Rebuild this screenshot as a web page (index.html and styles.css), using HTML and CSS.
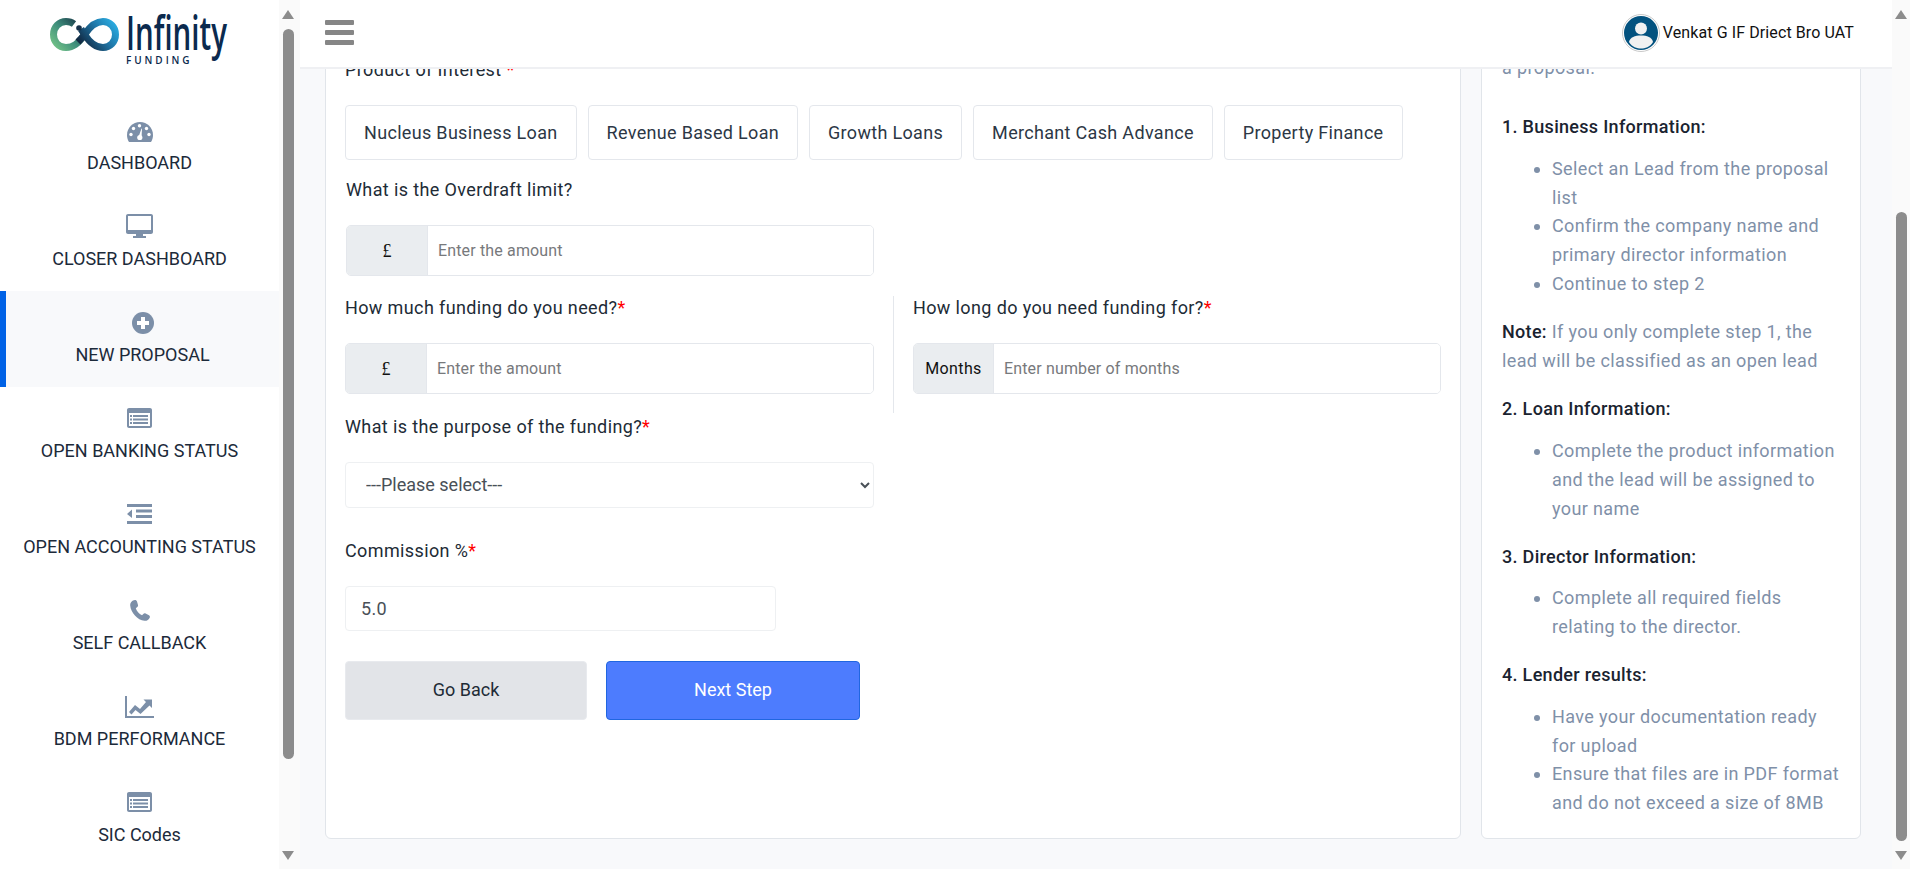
FILE: index.html
```html
<!DOCTYPE html>
<html lang="en">

<head>
    <meta charset="UTF-8">
    <meta name="viewport" content="width=device-width, initial-scale=1.0">
    <title>New Proposal - Infinity Funding</title>
    <link rel="stylesheet" href="styles.css">
</head>

<body>
    <div class="app">
        <aside class="sidebar">
            <div class="logo">
                <svg width="280" height="99" viewBox="0 0 280 99">
                    <defs>
                        <linearGradient id="logoLeft" gradientUnits="userSpaceOnUse" x1="54" y1="48" x2="84" y2="20">
                            <stop offset="0" stop-color="#73c387"></stop>
                            <stop offset="0.45" stop-color="#3f8f7c"></stop>
                            <stop offset="1" stop-color="#13293f"></stop>
                        </linearGradient>
                        <linearGradient id="logoRight" gradientUnits="userSpaceOnUse" x1="84" y1="48" x2="116" y2="22">
                            <stop offset="0" stop-color="#10263f"></stop>
                            <stop offset="0.55" stop-color="#1f77a8"></stop>
                            <stop offset="1" stop-color="#2bb0e6"></stop>
                        </linearGradient>
                    </defs>
                    <path class="logo-loop" stroke="url(#logoLeft)" d="M85 34C78 44 73 47.500 66 47.500C58 47.500 53.500 41 53.500 34.500C53.500 27 59 21.500 66 21.500C69 21.500 72 22.500 74 24"></path>
                    <path class="logo-loop" stroke="url(#logoRight)" d="M78 42C80 40 82 38 85 34C91 25 96 21.500 103 21.500C110 21.500 115.500 27 115.500 34.500C115.500 42 110 47.500 103 47.500C96 47.500 90 43 85 35L81 29"></path>
                    <circle cx="79" cy="28" r="2.800" fill="#16304a"></circle>
                    <text class="logo-name" x="126" y="50" textLength="101" lengthAdjust="spacingAndGlyphs">Infinity</text>
                    <text class="logo-sub" x="126" y="64" textLength="64">FUNDING</text>
                </svg>
            </div>
            <nav>
                <a class="nav-item" href="#">
                    <span class="nav-icon icon-low">
                        <svg width="26" height="20" viewBox="0 0 26 20">
                            <path class="icon-fill" d="M13 0C5.800 0 0 5.800 0 13C0 15.600.7 18 2 20H24C25.300 18 26 15.600 26 13C26 5.800 20.200 0 13 0Z"></path>
                            <g fill="#fff">
                                <circle cx="4" cy="12.500" r="1.700"></circle>
                                <circle cx="6.500" cy="6.500" r="1.700"></circle>
                                <circle cx="12.500" cy="3.800" r="1.700"></circle>
                                <circle cx="19.500" cy="6.500" r="1.700"></circle>
                                <circle cx="22" cy="12.500" r="1.700"></circle>
                                <circle cx="12.800" cy="15.500" r="2.600"></circle>
                                <path d="M11.500 15L14.500 6.500L15 6.700L14.500 16Z"></path>
                            </g>
                        </svg>
                    </span>
                    <span>DASHBOARD</span>
                </a>
                <a class="nav-item" href="#">
                    <span class="nav-icon">
                        <svg width="27" height="24" viewBox="0 0 27 24">
                            <path class="icon-fill" fill-rule="evenodd" d="M2 0H25C26.100 0 27 .9 27 2V18C27 19.100 26.100 20 25 20H17V22H20V24H7V22H10V20H2C.9 20 0 19.100 0 18V2C0 .9.900 0 2 0ZM2 2V16H25V2Z"></path>
                        </svg>
                    </span>
                    <span>CLOSER DASHBOARD</span>
                </a>
                <a class="nav-item active" href="#">
                    <span class="nav-icon icon-mid">
                        <svg width="22" height="22" viewBox="0 0 22 22">
                            <circle class="icon-fill" cx="11" cy="11" r="11"></circle>
                            <path fill="#fff" d="M9 5H13V9H17V13H13V17H9V13H5V9H9Z"></path>
                        </svg>
                    </span>
                    <span>NEW PROPOSAL</span>
                </a>
                <a class="nav-item" href="#">
                    <span class="nav-icon">
                        <svg width="25" height="20" viewBox="0 0 25 20">
                            <path class="icon-fill" fill-rule="evenodd" d="M2 0H23C24.100 0 25 .9 25 2V18C25 19.100 24.100 20 23 20H2C.9 20 0 19.100 0 18V2C0 .9.900 0 2 0ZM2 5V18H23V5Z"></path>
                            <path class="icon-fill" d="M6 7H21V9H6ZM6 10.500H21V12.500H6ZM6 14H21V16H6ZM3 7H5V9H3ZM3 10.500H5V12.500H3ZM3 14H5V16H3Z"></path>
                        </svg>
                    </span>
                    <span>OPEN BANKING STATUS</span>
                </a>
                <a class="nav-item" href="#">
                    <span class="nav-icon">
                        <svg width="25" height="20" viewBox="0 0 25 20">
                            <path class="icon-fill" d="M0 0H25V3H0ZM9 5.500H25V8.500H9ZM9 11H25V14H9ZM0 17H25V20H0ZM5 5.500V14L0 10Z"></path>
                        </svg>
                    </span>
                    <span>OPEN ACCOUNTING STATUS</span>
                </a>
                <a class="nav-item" href="#">
                    <span class="nav-icon">
                        <svg width="20" height="21" viewBox="0 0 20 21">
                            <path class="icon-fill" d="M5 0C6 0 6.500.5 7 1.500L8 5C8.200 6 7.800 6.600 7 7.200L5.800 8.200C6.500 11 9 14 12 15.300L13.300 14C14 13.300 14.700 13.100 15.600 13.500L19 15.300C20 16 20.100 16.800 19.700 17.700C18.800 19.800 16.800 21 14.500 20.800C7.500 20.200 .8 12.500.2 5.500C0 3 2 .2 5 0Z"></path>
                        </svg>
                    </span>
                    <span>SELF CALLBACK</span>
                </a>
                <a class="nav-item" href="#">
                    <span class="nav-icon icon-mid">
                        <svg width="29" height="22" viewBox="0 0 29 22">
                            <path class="icon-fill" d="M0 0H2V20H29V22H0ZM4 16L10 9L15 13L21 6L18.500 3.500H27V12L24.500 9.500L15.500 18L10.500 14L6.500 18.500Z"></path>
                        </svg>
                    </span>
                    <span>BDM PERFORMANCE</span>
                </a>
                <a class="nav-item" href="#">
                    <span class="nav-icon">
                        <svg width="25" height="20" viewBox="0 0 25 20">
                            <path class="icon-fill" fill-rule="evenodd" d="M2 0H23C24.100 0 25 .9 25 2V18C25 19.100 24.100 20 23 20H2C.9 20 0 19.100 0 18V2C0 .9.900 0 2 0ZM2 5V18H23V5Z"></path>
                            <path class="icon-fill" d="M6 7H21V9H6ZM6 10.500H21V12.500H6ZM6 14H21V16H6ZM3 7H5V9H3ZM3 10.500H5V12.500H3ZM3 14H5V16H3Z"></path>
                        </svg>
                    </span>
                    <span>SIC Codes</span>
                </a>
            </nav>
        </aside>

        <div class="scrollbar scrollbar-side">
            <span class="arrow-up"></span>
            <span class="thumb thumb-side"></span>
            <span class="arrow-down arrow-down-side"></span>
        </div>

        <div class="main">
            <header class="topbar">
                <div class="hamburger"><span></span><span></span><span></span></div>
                <div class="user">
                    <svg width="38" height="38" viewBox="0 0 38 38">
                        <circle cx="19" cy="19" r="18.500" fill="#fff" stroke="#c9c9c9"></circle>
                        <circle cx="19" cy="19" r="17" fill="#03527f"></circle>
                        <circle cx="19" cy="14.500" r="6" fill="#f1f1f1"></circle>
                        <path fill="#f1f1f1" d="M7 28C8 23 13 21.500 19 21.500C25 21.500 30 23 31 28C28 33 23 34.500 19 34.500C15 34.500 10 33 7 28Z"></path>
                    </svg>
                    <span>Venkat G IF Driect Bro UAT</span>
                </div>
            </header>

            <div class="content">
                <div class="cards">
                    <section class="card form-card">
                        <label class="field-label product-label">Product of Interest <span class="req">*</span></label>
                        <div class="tabs">
                            <button class="tab">Nucleus Business Loan</button>
                            <button class="tab">Revenue Based Loan</button>
                            <button class="tab">Growth Loans</button>
                            <button class="tab">Merchant Cash Advance</button>
                            <button class="tab">Property Finance</button>
                        </div>

                        <label class="field-label overdraft-label">What is the Overdraft limit?</label>
                        <div class="input-group overdraft-group">
                            <span class="prefix prefix-pound">£</span>
                            <input type="text" placeholder="Enter the amount">
                        </div>

                        <div class="two-cols">
                            <div class="col-left">
                                <label class="field-label">How much funding do you need?<span class="req">*</span></label>
                                <div class="input-group">
                                    <span class="prefix prefix-pound">£</span>
                                    <input type="text" placeholder="Enter the amount">
                                </div>
                            </div>
                            <div class="col-right">
                                <label class="field-label">How long do you need funding for?<span class="req">*</span></label>
                                <div class="input-group">
                                    <span class="prefix">Months</span>
                                    <input type="text" placeholder="Enter number of months">
                                </div>
                            </div>
                        </div>

                        <label class="field-label purpose-label">What is the purpose of the funding?<span class="req">*</span></label>
                        <select class="purpose">
                            <option>---Please select---</option>
                        </select>

                        <label class="field-label">Commission %<span class="req">*</span></label>
                        <input class="commission" type="text" value="5.0">

                        <div class="actions">
                            <button class="btn btn-back">Go Back</button>
                            <button class="btn btn-next">Next Step</button>
                        </div>
                    </section>

                    <section class="card help-card">
                        <p class="help-intro">a proposal.</p>
                        <h6>1. Business Information:</h6>
                        <ul>
                            <li>Select an Lead from the proposal list</li>
                            <li>Confirm the company name and primary director information</li>
                            <li>Continue to step 2</li>
                        </ul>
                        <p><b>Note:</b> If you only complete step 1, the lead will be classified as an open lead</p>
                        <h6>2. Loan Information:</h6>
                        <ul>
                            <li>Complete the product information and the lead will be assigned to your name</li>
                        </ul>
                        <h6>3. Director Information:</h6>
                        <ul>
                            <li>Complete all required fields relating to the director.</li>
                        </ul>
                        <h6>4. Lender results:</h6>
                        <ul>
                            <li>Have your documentation ready for upload</li>
                            <li>Ensure that files are in PDF format and do not exceed a size of 8MB</li>
                        </ul>
                    </section>
                </div>
            </div>
        </div>

        <div class="scrollbar scrollbar-page">
            <span class="arrow-up"></span>
            <span class="thumb thumb-page"></span>
            <span class="arrow-down"></span>
        </div>
    </div>
</body>

</html>
```

FILE: styles.css
```css
* {
    box-sizing: border-box;
}

html,
body {
    height: 100%;
    margin: 0;
    overflow: hidden;
}

body {
    font-family: Roboto, "Liberation Sans", sans-serif;
    font-size: 18px;
    line-height: 24px;
    letter-spacing: 0.38px;
    color: #212b36;
    background-color: #f8f9fb;
}

.app {
    display: flex;
    height: 869px;
}

/* sidebar */
.sidebar {
    width: 279px;
    flex: none;
    background-color: #fff;
}

.logo {
    height: 99px;
}

.logo svg {
    display: block;
}

.logo-loop {
    fill: none;
    stroke-width: 7;
}

.logo-name {
    font-family: "Open Sans", sans-serif;
    font-size: 47px;
    font-weight: 600;
    letter-spacing: 0;
    fill: #0b2a4e;
}

.logo-sub {
    font-family: "Open Sans", sans-serif;
    font-size: 10px;
    font-weight: 600;
    fill: #0b2a4e;
}

.nav-item {
    display: flex;
    flex-direction: column;
    align-items: center;
    height: 96px;
    padding-top: 18px;
    color: #1c2a3a;
    text-decoration: none;
    letter-spacing: 0;
}

.nav-item.active {
    background-color: #f8f9fb;
    border-left: 6px solid #0062e6;
}

.nav-icon {
    display: flex;
    align-items: center;
    justify-content: center;
    height: 26px;
    margin-bottom: 8px;
}

.nav-icon svg {
    display: block;
}

.icon-low svg {
    margin-top: 4px;
}

.icon-mid svg {
    margin-top: 2px;
}

.icon-fill {
    fill: #7c8fa8;
}

/* fake scrollbars */
.scrollbar {
    flex: none;
    display: flex;
    flex-direction: column;
    align-items: center;
    background-color: #fafafa;
}

.scrollbar-side {
    width: 21px;
    padding-left: 1px;
    padding-right: 4px;
}

.scrollbar-page {
    width: 18px;
}

.arrow-up,
.arrow-down {
    display: block;
    width: 0;
    height: 0;
    border-left: 6.5px solid transparent;
    border-right: 6.5px solid transparent;
}

.arrow-up {
    margin-top: 10px;
    border-bottom: 9px solid #8c8c8c;
}

.arrow-down {
    margin-top: 10px;
    border-top: 9px solid #8c8c8c;
}

.arrow-down-side {
    margin-top: 92px;
}

.thumb {
    display: block;
    width: 11px;
    border-radius: 6px;
    background-color: #8c8c8c;
}

.thumb-side {
    height: 730px;
    margin-top: 10px;
}

.thumb-page {
    height: 629px;
    margin-top: 193px;
}

/* main */
.main {
    flex: 1;
    min-width: 0;
    display: flex;
    flex-direction: column;
}

.topbar {
    flex: none;
    display: flex;
    align-items: center;
    justify-content: space-between;
    height: 69px;
    padding: 0 38px 2px 25px;
    background-color: #fff;
    border-bottom: 2px solid #eff0f3;
    position: relative;
    z-index: 1;
}

.hamburger {
    display: flex;
    flex-direction: column;
    gap: 5px;
    width: 29px;
}

.hamburger span {
    height: 5px;
    background-color: #868686;
    border-radius: 1px;
}

.user {
    display: flex;
    align-items: center;
    gap: 3px;
    color: #111;
    font-size: 16px;
    letter-spacing: 0.1px;
}

.content {
    flex: 1;
    min-height: 0;
    overflow: hidden;
    display: flex;
    flex-direction: column;
    justify-content: flex-end;
    padding: 0 31px 30px 25px;
}

.cards {
    display: flex;
    align-items: flex-end;
    gap: 20px;
}

.card {
    flex: none;
    background-color: #fff;
    border: 1px solid #e1e5ea;
    border-radius: 6px;
}

/* form card */
.form-card {
    width: 1136px;
    padding: 20px 19px 118px;
}

.field-label {
    display: block;
    margin-bottom: 23px;
}

.purpose-label {
    margin-top: 2px;
}

.req {
    color: #f00;
}

.tabs {
    display: flex;
    gap: 11px;
    margin-bottom: 18px;
}

.tab {
    height: 55px;
    padding: 0 18px;
    background-color: #fff;
    border: 1px solid #e4e7ec;
    border-radius: 4px;
    font: inherit;
    letter-spacing: 0.32px;
    color: #2c3745;
}

.overdraft-label {
    margin-left: 1px;
}

.input-group {
    display: flex;
    height: 51px;
    border: 1px solid #e4e7ec;
    border-radius: 5px;
    overflow: hidden;
}

.overdraft-group {
    margin-left: 1px;
    width: 528px;
    margin-bottom: 20px;
}

.prefix {
    flex: none;
    display: flex;
    align-items: center;
    justify-content: center;
    width: 80px;
    background-color: #eaedf0;
    border-right: 1px solid #e4e7ec;
    color: #111;
    font-size: 16px;
}

.prefix-pound {
    width: 81px;
    font-family: "Liberation Serif", serif;
    font-size: 18px;
    letter-spacing: 0;
}

.input-group input {
    flex: 1;
    min-width: 0;
    border: 0;
    outline: 0;
    padding: 0 10px;
    font-family: inherit;
    font-size: 16px;
    letter-spacing: 0.15px;
    color: #495057;
}

.input-group input::placeholder {
    color: #77797c;
    opacity: 1;
}

.two-cols {
    display: flex;
}

.col-left {
    width: 529px;
    margin-right: 19px;
    padding-bottom: 19px;
}

.col-right {
    flex: 1;
    padding-left: 19px;
    padding-bottom: 19px;
    border-left: 1px solid #e4e7ec;
}

.purpose {
    display: block;
    width: 529px;
    height: 46px;
    margin-bottom: 31px;
    padding: 0 18px 2px 16px;
    background-color: #fff;
    border: 1px solid #eef0f2;
    border-radius: 4px;
    font: inherit;
    letter-spacing: 0;
    color: #495057;
}

.commission {
    display: block;
    width: 431px;
    height: 45px;
    padding: 0 15px;
    background-color: #fff;
    border: 1px solid #eef0f2;
    border-radius: 4px;
    font: inherit;
    letter-spacing: inherit;
    color: #495057;
}

.actions {
    display: flex;
    gap: 19px;
    margin-top: 30px;
}

.btn {
    height: 59px;
    padding: 0 0 2px;
    border-radius: 4px;
    font: inherit;
    letter-spacing: 0;
}

.btn-back {
    width: 242px;
    background-color: #e2e4e8;
    border: 1px solid #e8eaee;
    color: #212b36;
}

.btn-next {
    width: 254px;
    background-color: #4d7cfe;
    border: 1px solid #2066e0;
    color: #fff;
}

/* help card */
.help-card {
    width: 380px;
    padding: 0 20px 1px;
    line-height: 28.8px;
    color: #7f90a8;
}

.help-card p {
    margin: 0 0 20px;
}

.help-card .help-intro {
    margin-bottom: 30px;
}

.help-card b,
.help-card h6 {
    font-weight: 500;
    color: #1a2330;
    letter-spacing: 0.3px;
}

.help-card h6 {
    margin: 0 0 13px;
    font-size: 18px;
    line-height: 28.8px;
}

.help-card ul {
    margin: 0 0 19px;
    padding-left: 50px;
}
```
